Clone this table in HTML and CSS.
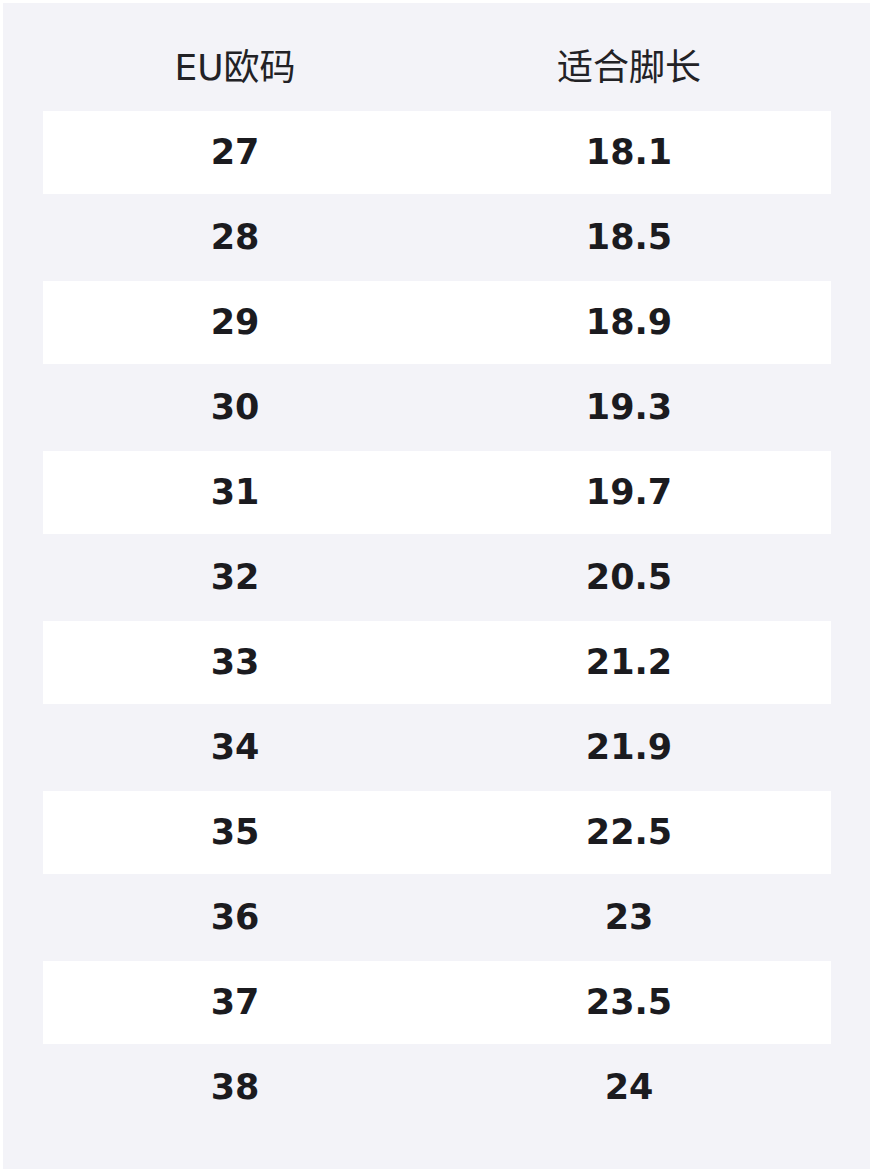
FILE: index.html
```html
<!DOCTYPE html>
<html lang="zh">
<head>
<meta charset="utf-8">
<title>尺码表</title>
<link rel="stylesheet" href="styles.css">
</head>
<body>
<div class="panel">
  <div class="table">
    <div class="row head"><div class="cell">EU欧码</div><div class="cell">适合脚长</div></div>
    <div class="row odd"><div class="cell">27</div><div class="cell">18.1</div></div>
    <div class="row"><div class="cell">28</div><div class="cell">18.5</div></div>
    <div class="row odd"><div class="cell">29</div><div class="cell">18.9</div></div>
    <div class="row"><div class="cell">30</div><div class="cell">19.3</div></div>
    <div class="row odd"><div class="cell">31</div><div class="cell">19.7</div></div>
    <div class="row"><div class="cell">32</div><div class="cell">20.5</div></div>
    <div class="row odd"><div class="cell">33</div><div class="cell">21.2</div></div>
    <div class="row"><div class="cell">34</div><div class="cell">21.9</div></div>
    <div class="row odd"><div class="cell">35</div><div class="cell">22.5</div></div>
    <div class="row"><div class="cell">36</div><div class="cell">23</div></div>
    <div class="row odd"><div class="cell">37</div><div class="cell">23.5</div></div>
    <div class="row"><div class="cell">38</div><div class="cell">24</div></div>
  </div>
</div>
</body>
</html>
```
FILE: styles.css
```css
html, body {
  margin: 0;
  padding: 0;
  background: #ffffff;
}
body {
  padding: 3px 4px 4px 3px;
}
.panel {
  background: #f3f3f8;
  height: 1166px;
  box-sizing: border-box;
  padding: 22px 39px 0 40px;
  font-family: "DejaVu Sans", "Noto Sans CJK SC", sans-serif;
  color: #1b1b1f;
}
.table {
  display: flex;
  flex-direction: column;
}
.row {
  display: grid;
  grid-template-columns: 384px 1fr;
  height: 85px;
  box-sizing: border-box;
  border-top: 1px solid transparent;
  border-bottom: 1px solid transparent;
  background-clip: padding-box;
  align-items: center;
  font-size: 35px;
  font-weight: bold;
}
.row.odd {
  background-color: #ffffff;
}
.row.head {
  font-weight: normal;
  font-size: 36px;
  color: #222226;
}
.cell {
  text-align: center;
  line-height: 1;
}
```
